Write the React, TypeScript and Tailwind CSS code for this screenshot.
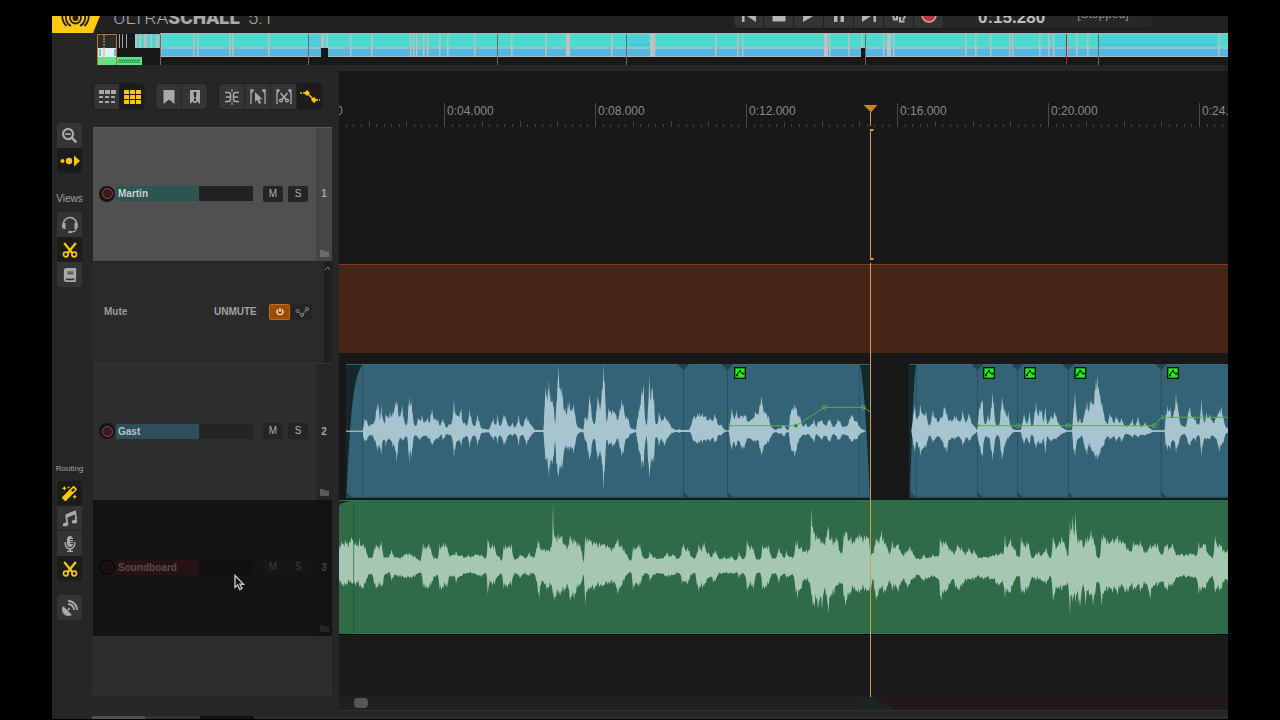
import type { ReactNode } from "react";
import { FaBook, FaHeadset, FaMagic, FaMicrophoneAlt, FaMusic, FaSatelliteDish, FaSearchMinus } from "react-icons/fa";

/* Peaks are [position, height above, depth below], three units to a pixel. */
type Peak = [number, number, number];
type Block = { start: number; peaks: Peak[] };

const guestFirst: Block[] = [
  { start: 3, peaks: [[18,1,1],[68,1,1],[70,12,20],[74,38,32],[80,34,30],[86,14,16],[92,22,14],[98,20,14],[104,30,30],[108,60,40],[112,84,62],[116,82,50],[120,30,50],[124,78,72],[128,40,30],[134,22,28],[137,55,48],[141,46,30],[146,40,25],[150,60,28],[154,46,32],[158,58,50],[162,60,42],[166,88,60],[170,92,96],[173,82,66],[177,46,30],[182,50,20],[187,78,30],[191,40,28],[196,20,18],[202,24,22],[205,72,60],[208,104,96],[211,80,60],[215,92,82],[218,56,50],[222,20,14],[228,14,14],[234,40,22],[240,34,28],[246,48,20],[252,25,16],[258,32,14],[263,42,22],[268,24,24],[272,50,34],[276,66,44],[280,42,38],[284,38,30],[289,36,24],[294,36,26],[300,14,16],[304,26,10],[308,38,28],[314,22,20],[320,10,10],[326,20,12],[332,20,12],[338,40,30],[342,96,82],[346,56,56],[350,50,32],[355,46,30],[360,56,32],[364,70,48],[368,26,24],[374,26,20],[380,16,14],[386,40,30],[389,68,54],[393,46,30],[398,20,16],[404,14,14],[409,30,24],[413,52,46],[418,30,26],[424,8,6],[446,4,4],[452,18,14],[456,30,20],[460,40,30],[464,20,16],[469,20,18],[472,52,40],[476,24,18],[482,16,16],[488,34,26],[492,52,46],[496,46,38],[500,30,24],[506,16,14],[512,14,10],[518,26,16],[524,10,8],[530,20,14],[536,50,46],[540,20,16],[548,12,12],[554,34,24],[560,46,44],[566,32,28],[572,20,16],[580,10,6],[586,3,3],[610,3,3],[613,60,46],[616,134,90],[620,104,86],[624,124,110],[627,154,148],[630,116,110],[634,90,90],[638,92,100],[641,80,82],[645,22,30],[649,80,100],[653,150,130],[656,196,142],[660,130,118],[664,134,112],[668,120,118],[672,60,62],[676,72,52],[680,50,50],[684,88,60],[688,90,60],[692,60,48],[696,70,56],[701,82,68],[706,46,40],[712,14,12],[720,8,4],[730,4,4],[734,40,26],[738,44,32],[743,36,60],[748,108,88],[753,76,70],[758,30,30],[764,20,24],[769,60,60],[773,106,88],[778,80,70],[782,76,70],[786,130,100],[790,196,182],[794,150,120],[799,26,26],[806,70,44],[812,60,38],[817,66,50],[822,60,44],[828,50,32],[834,34,24],[840,70,56],[845,96,78],[850,80,68],[855,44,34],[860,44,24],[866,36,20],[872,8,8],[888,3,3],[892,36,30]] },
  { start: 843, peaks: [[56,60,60],[60,78,70],[64,130,118],[67,110,90],[71,142,110],[75,40,40],[80,14,14],[84,70,90],[88,168,144],[91,100,110],[95,130,90],[98,136,98],[102,100,96],[106,24,20],[112,20,20],[117,58,48],[122,40,26],[128,34,34],[134,46,46],[138,38,30],[144,34,22],[150,20,12],[158,8,6],[168,3,3],[178,5,5],[190,3,3],[206,3,3],[212,14,6],[218,36,26],[224,48,34],[228,40,36],[233,54,40],[238,56,38],[243,44,28],[247,56,38],[252,44,26],[258,48,34],[263,34,26],[270,40,32],[277,30,20],[284,52,36],[290,36,30],[296,18,12],[303,20,14],[310,8,6],[318,2,2],[326,2,2],[331,30,40],[335,70,58],[340,44,34],[346,44,50],[350,64,44],[356,40,30],[362,48,44],[366,46,54],[372,50,56],[378,48,34],[384,30,24],[392,34,24],[400,40,32],[406,60,34],[412,52,28],[419,78,52],[424,104,74],[429,72,60],[434,60,44],[440,54,40],[446,46,36],[452,16,20],[458,8,8],[468,3,3],[478,10,10],[482,6,6],[488,18,14],[494,18,16],[498,6,6],[506,3,3],[510,50,40],[514,64,60],[519,72,64],[524,80,78],[530,68,58],[535,48,36],[540,46,22],[546,18,14],[552,16,12],[558,24,14],[564,12,10],[570,16,14],[575,20,22],[582,36,36],[588,12,10],[594,30,16],[600,30,20],[606,34,28],[612,22,16],[618,16,16],[624,32,30],[630,36,34],[636,18,14],[642,12,10],[648,20,16],[653,36,30],[660,30,26],[666,14,12],[674,14,12],[682,16,14],[688,36,24],[694,50,34],[700,42,30],[706,30,26],[712,30,26],[718,14,12],[726,5,5],[738,1,1]] },
];

const guestSecond: Block[] = [
  { start: 1683, peaks: [[34,1,1],[36,14,14],[40,50,40],[45,78,64],[50,36,30],[55,46,50],[61,80,76],[66,54,58],[72,50,50],[78,60,52],[84,24,24],[90,18,14],[95,40,24],[99,64,36],[104,42,28],[109,40,20],[115,28,18],[121,42,22],[126,40,30],[132,76,50],[136,70,56],[141,56,68],[146,30,28],[152,36,26],[158,32,22],[164,48,26],[170,44,22],[176,30,16],[182,30,24],[188,62,44],[194,34,32],[200,30,20],[206,54,30],[212,36,26],[218,20,14],[226,12,8],[231,3,3],[234,30,28],[238,70,44],[243,90,70],[248,96,80],[252,30,30],[258,20,14],[264,50,22],[269,30,24],[273,70,60],[277,118,90],[281,86,66],[285,30,26],[292,16,12],[298,20,20],[302,60,60],[306,104,86],[310,76,68],[315,66,44],[320,46,28],[325,60,24],[330,20,16],[338,6,5],[350,3,3],[362,3,3],[366,20,20],[372,52,40],[378,26,20],[384,30,30],[389,60,42],[394,14,12],[400,20,16],[404,56,40],[408,88,54],[413,50,34],[419,66,40],[425,64,40],[430,26,20],[436,72,70],[441,24,18],[447,30,26],[453,48,32],[458,36,28],[463,60,24],[469,46,26],[476,24,18],[484,12,10],[494,6,5],[502,2,2],[516,2,2],[520,60,56],[525,116,76],[529,60,42],[534,24,24],[540,40,22],[546,24,16],[551,40,36],[556,66,58],[561,90,74],[565,60,46],[570,96,50],[575,90,60],[580,80,68],[584,120,76],[588,156,86],[592,170,90],[596,130,78],[601,104,64],[606,86,52],[612,52,44],[618,28,24],[624,22,16],[629,54,26],[635,44,24],[641,24,16],[648,46,34],[653,36,24],[658,24,16],[664,40,34],[670,24,22],[676,16,10],[684,14,10],[692,24,14],[697,38,22],[702,14,12],[708,22,14],[714,44,20],[719,20,14],[726,12,12],[736,26,14],[742,16,10],[750,8,8],[758,2,2],[794,2,2],[797,50,46],[802,78,60],[806,60,44],[811,70,56],[816,36,30],[822,60,30],[828,114,66],[832,84,50],[837,48,36],[842,20,16],[850,14,10],[858,16,14],[864,52,36],[870,74,46],[875,44,30],[881,44,22],[886,38,32],[892,20,14],[898,20,14],[902,60,50],[905,102,80],[908,50,46],[914,24,20],[920,56,26],[925,40,24],[930,52,26],[936,34,14],[942,24,18],[948,44,24],[953,50,40],[958,64,64],[964,76,46],[970,40,36],[976,14,10],[984,8,6]] },
];

const soundboardAudio: Block[] = [
  { start: 3, peaks: [[-3,70,56],[0,60,50],[5,74,56],[10,66,62],[16,80,60],[22,70,56],[28,74,50],[34,88,52],[40,78,56],[46,72,60],[52,64,50],[58,84,64],[64,60,66],[70,68,70],[76,60,54],[82,34,36],[90,26,26],[98,28,28],[103,54,56],[108,66,70],[114,60,64],[120,64,60],[124,76,64],[129,36,56],[134,26,26],[142,28,24],[150,36,22],[154,50,44],[160,32,34],[168,28,28],[176,26,34],[184,28,34],[192,34,36],[200,38,36],[208,40,36],[216,34,36],[224,32,34],[232,22,24],[240,14,20],[246,40,30],[249,72,66],[255,60,68],[261,56,68],[267,70,66],[272,56,60],[278,30,46],[286,26,34],[294,24,28],[299,66,70],[304,58,74],[310,70,66],[316,72,60],[321,60,66],[327,34,34],[334,34,34],[342,36,32],[348,46,52],[356,30,34],[366,34,30],[376,26,24],[386,34,22],[396,30,24],[406,36,24],[416,34,30],[424,36,34],[432,26,24],[440,30,28],[443,84,86],[447,70,56],[453,56,50],[458,68,60],[464,64,56],[470,32,36],[478,28,28],[486,16,26],[491,60,70],[496,66,62],[502,56,66],[508,62,54],[514,68,60],[520,26,30],[530,22,24],[540,34,36],[550,30,24],[560,26,28],[568,42,30],[576,30,24],[584,28,26],[589,54,44],[594,80,80],[598,70,98],[602,56,60],[608,50,46],[614,52,56],[620,50,72],[627,50,66],[632,56,60],[637,80,70],[639,188,88],[642,96,106],[648,90,94],[654,98,84],[660,88,90],[666,94,74],[672,68,78],[678,66,70],[684,60,64],[690,94,104],[696,76,90],[702,84,100],[708,76,82],[714,74,66],[720,66,60],[726,40,46],[731,10,26],[736,92,118],[741,86,80],[748,82,72],[754,76,66],[762,74,74],[770,72,60],[778,72,64],[786,66,62],[794,68,58],[802,64,54],[810,58,54],[818,56,54],[826,66,54],[834,84,86],[840,60,70],[846,64,60],[852,52,46],[860,36,28],[868,18,20],[875,20,24],[879,60,76],[884,58,64],[890,54,52],[896,66,62]] },
  { start: 843, peaks: [[60,66,60],[64,46,46],[70,28,30],[78,22,22],[86,26,26],[89,46,46],[95,34,36],[104,28,28],[114,22,22],[124,24,24],[134,30,30],[142,42,34],[150,30,32],[158,36,28],[166,30,26],[174,22,22],[181,30,26],[186,58,56],[190,68,46],[196,48,50],[202,56,58],[208,46,42],[216,28,26],[226,24,22],[231,40,60],[236,66,76],[242,52,62],[248,62,70],[252,74,60],[258,46,50],[266,42,38],[272,28,34],[280,40,50],[286,48,46],[294,28,26],[304,22,24],[314,28,22],[324,24,24],[334,30,22],[344,18,24],[352,22,20],[357,44,38],[362,30,28],[370,20,22],[377,30,34],[381,80,76],[387,60,62],[394,64,60],[400,54,70],[406,28,34],[414,20,20],[422,22,24],[427,66,72],[433,54,68],[440,60,62],[446,64,56],[452,34,34],[462,24,24],[470,28,26],[477,56,50],[484,40,30],[492,24,24],[499,48,36],[505,30,34],[514,28,26],[522,30,34],[527,74,80],[532,78,98],[538,50,74],[544,60,70],[552,44,42],[560,50,44],[566,50,50],[571,60,60],[574,176,90],[578,120,118],[584,100,124],[589,96,100],[594,86,130],[600,84,96],[606,78,130],[612,70,76],[618,90,90],[622,108,110],[626,122,142],[630,80,96],[636,90,90],[642,74,90],[648,86,60],[654,76,60],[660,44,56],[666,38,54],[671,96,92],[676,104,120],[681,104,100],[687,80,90],[693,90,84],[700,76,70],[707,84,76],[714,92,80],[718,98,84],[725,90,72],[733,94,76],[740,92,76],[747,84,76],[752,36,80],[758,40,40],[763,60,70],[768,84,102],[774,76,90],[780,88,74],[785,108,66],[790,84,84],[797,70,78],[804,50,56],[811,40,50],[817,78,76],[823,60,66],[829,62,62],[835,70,80]] },
  { start: 1683, peaks: [[0,50,60],[8,34,44],[16,46,52],[22,44,66],[30,60,54],[36,48,42],[44,30,38],[54,24,28],[64,22,38],[72,36,46],[80,24,40],[90,28,36],[98,36,34],[108,30,36],[117,30,42],[120,86,90],[124,74,108],[130,76,84],[137,76,80],[144,60,70],[150,54,56],[158,44,40],[166,44,66],[172,66,68],[178,56,76],[184,58,62],[192,42,52],[200,44,46],[207,56,40],[214,38,42],[222,50,42],[230,34,34],[240,26,36],[250,28,40],[260,28,34],[270,30,42],[280,34,40],[288,40,56],[296,34,60],[304,42,50],[311,40,60],[315,96,96],[320,60,80],[326,66,80],[332,84,82],[338,60,60],[346,50,40],[354,30,34],[360,30,34],[363,92,86],[368,76,80],[374,62,84],[380,76,76],[386,70,66],[392,34,44],[400,24,36],[408,40,44],[416,46,42],[424,30,44],[432,44,50],[438,56,56],[446,30,40],[454,28,36],[459,90,106],[465,66,80],[471,58,70],[478,76,70],[485,90,76],[492,74,60],[499,48,60],[505,30,60],[510,140,146],[514,112,90],[518,150,110],[522,90,88],[526,162,110],[531,88,84],[536,84,110],[540,80,124],[546,80,70],[552,56,66],[557,86,120],[563,90,76],[568,80,90],[573,108,88],[579,90,118],[586,60,80],[592,26,50],[600,28,60],[605,90,120],[611,96,84],[617,86,76],[623,82,78],[630,70,66],[638,84,80],[646,82,70],[653,94,88],[660,80,68],[668,76,60],[676,68,82],[684,54,80],[692,44,60],[700,74,74],[707,66,70],[714,66,56],[721,76,78],[728,58,66],[736,44,56],[744,48,66],[751,66,100],[757,60,66],[765,70,60],[773,70,64],[780,40,50],[786,34,48],[794,60,66],[802,68,76],[810,56,62],[817,70,60],[824,46,46],[834,34,36],[846,38,32],[858,36,36],[870,38,32],[882,36,36],[892,36,44],[896,74,86],[903,58,78],[910,68,66],[917,66,70],[923,40,50],[932,30,36],[940,30,40],[945,90,82],[951,64,66],[958,68,76],[965,62,70],[972,50,50],[978,42,40],[984,50,46]] },
];

function wavePath(blocks: Block[], middle: number) {
  const points = blocks.flatMap((b) => b.peaks.map(([x, u, d]): Peak => [x + b.start, u, d]));
  const dense: Peak[] = [];
  points.forEach((p, i) => {
    dense.push(p);
    const next = points[i + 1];
    if (next && next[0] - p[0] > 2 && next[0] - p[0] < 14) {
      const dip = 0.74 + ((i * 7) % 5) * 0.05;
      dense.push([(p[0] + next[0]) / 2, ((p[1] + next[1]) / 2) * dip, ((p[2] + next[2]) / 2) * dip]);
    }
  });
  const top = dense.map(([x, u]) => `${x},${middle - u}`);
  const bottom = dense.map(([x, , d]) => `${x},${middle + d}`).reverse();
  return `M${[...top, ...bottom].join("L")}Z`;
}

function EnvelopeBadge({ x }: { x: number }) {
  return (
    <g transform={`translate(${x - 18} 9)`}>
      <rect width="36" height="36" fill="#061006" />
      <rect x="4" y="4" width="28" height="28" fill="#22ee22" />
      <path d="M8 25 13 17 18 12 23 18 28 19" fill="none" stroke="#052505" strokeWidth="3.5" />
      <path d="M6 22h6v6H6zM15 9h6v6h-6zM25 17h6v6h-6z" fill="#052505" />
    </g>
  );
}

function GuestLane() {
  const splits = [1033, 1165, 1915, 2035, 2188, 2466];
  return (
    <svg className="block h-[134px] w-full" viewBox="0 0 2667 402" preserveAspectRatio="none" aria-label="Gast audio">
      <path d="M21 0H1593V402H21ZM1712 0H2667V402H1712Z" fill="#336375" />
      <path d="M21 0H71C40 40 34 170 22 402H21ZM1563 0H1593V402C1586 250 1576 60 1563 0ZM1712 0H1732C1722 60 1718 240 1713 402H1712Z" fill="#16272c" />
      <path d="M21 1H1593M1712 1H2667" stroke="#3a7180" strokeWidth="3" />
      <path d="M71 4V402M1561 4V402M1732 4V402" stroke="#2a5464" strokeWidth="3" />
      {splits.map((x) => (
        <g key={x} fill="#234450">
          <path d={`M${x - 1} 0h3v402h-3z`} fill="#28505f" />
          <path d={`M${x - 18} 0h36L${x} 19z`} />
          <path d={`M${x} 384 ${x + 18} 402H${x}z`} />
        </g>
      ))}
      <path d="M23 384 40 402H23ZM1714 384 1731 402H1714Z" fill="#234450" />
      <path d="M21 202H75M2440 202H2480M1010 202H1060" stroke="#a6c5d0" strokeWidth="3" />
      <path d={wavePath(guestFirst, 201)} fill="#a6c5d0" />
      <path d={wavePath(guestSecond, 201)} fill="#a6c5d0" />
      <g fill="none" stroke="#5cab4d" strokeWidth="3">
        <path d="M1169 185H1371L1457 130H1573L1593 143M1916 185H2445L2467 160H2667" />
        <circle cx="1371" cy="185" r="5" fill="#2e6a3c" />
        <circle cx="1457" cy="130" r="6" />
        <circle cx="1573" cy="130" r="6" />
        <circle cx="2036" cy="185" r="6" />
        <circle cx="2188" cy="185" r="6" />
        <circle cx="2445" cy="185" r="6" />
        <path d="M1167 179a6 6 0 0 1 0 12M1914 179a6 6 0 0 1 0 12M2466 154a6 6 0 0 1 0 12" />
      </g>
      {[1203, 1950, 2073, 2224, 2502].map((x) => <EnvelopeBadge key={x} x={x} />)}
      <path d="M21 400H1593M1712 400H2667" stroke="#274d5b" strokeWidth="3" />
    </svg>
  );
}

function SoundboardLane() {
  return (
    <svg className="block h-[134px] w-full" viewBox="0 0 2667 402" preserveAspectRatio="none" aria-label="Soundboard audio">
      <path d="M0 0H2667V402H0Z" fill="#306b48" />
      <path d="M0 3H42C24 3 10 8 0 16Z" fill="#16281f" />
      <path d="M0 1H2667M0 400H2667" stroke="#2b7350" strokeWidth="3" />
      <path d={wavePath(soundboardAudio, 198)} fill="#a5c7b4" />
      <path d="M44 4V402" stroke="#1c4a33" strokeWidth="3" opacity=".6" />
    </svg>
  );
}

function Overview() {
  const joints = [160, 193, 197, 229, 232, 268, 350, 371, 410, 413, 416, 423, 427, 439, 447, 474, 511, 545, 611, 654, 715, 737, 742, 829, 848, 861, 883, 893, 965, 975, 990, 1009, 1012, 1039, 1048, 1053, 1066, 1076, 1087, 1218];
  const wide = [566, 650, 824, 887];
  return (
    <svg className="block h-8 w-full" viewBox="97 33 1131 32" preserveAspectRatio="none" aria-label="Project overview">
      <path d="M97 33h1131v32H97z" fill="#181818" />
      <path d="M160 33h1068v24H160z" fill="#a9b9bc" />
      <path d="M160 34h1068v14H160z" fill="#4cdacf" />
      <path d="M160 47h1068v2H160z" fill="#a3bdc0" />
      <path d="M160 49h1068v7H160z" fill="#4db9e6" />
      <path d="M309 35h12v12h-12zM1053 35h16v12h-16zM1098 35h119v12h-119zM627 35h22v12h-22z" fill="#4bcfdb" />
      <path d="M630 44.500h19M1100 44.500h115" stroke="#3f96d2" strokeDasharray="1 1" />
      {joints.map((x) => <path key={x} d={`M${x} 34h1.500v23h-1.500z`} fill="#b9bfc0" />)}
      {wide.map((x) => <path key={x} d={`M${x} 34h4v23h-4z`} fill="#bcc2c3" />)}
      <path d="M321 34h3v14h-3zM326 34h2v14h-2z" fill="#b5bfc0" />
      <path d="M321 48h7v10h-7zM861 48h4.500v10H861z" fill="#161616" />
      <path d="M135 34h25v14h-25z" fill="#4cdacf" />
      <path d="M135 34h2v14h-2zM139 34h2v14h-2zM144 34h3v14h-3zM150 34h2v14h-2zM156 34h3v14h-3z" fill="#b5bfc0" />
      <path d="M119 34h1v14h-1zM122 34h1v14h-1zM126 34h1v14h-1z" fill="#a5a5a5" />
      <path d="M98 34h18v14H98z" fill="#2c2c2c" />
      <path d="M98 48h18v9H98z" fill="#dff0f4" />
      <path d="M99 49h2v7h-2zM114 49h2v7h-2z" fill="#5ec3e6" />
      <path d="M98 57h44v8H98z" fill="#5fe28e" />
      <path d="M118 59h22v4h-22z" fill="#30a95a" />
      <path d="M118 59.500h22M119 61.500h21" stroke="#62dd8a" strokeDasharray="1 1" />
      <path d="M97.500 65V34.500H116.500V65" fill="none" stroke="#c87516" />
      <path d="M104 35v13" stroke="#e0b060" strokeDasharray="2 1" />
      <path d="M104 48v17" stroke="#e0a850" />
      <path d="M160.500 34v31M308.500 34v31M497.500 34v31M626.500 34v31M865.500 34v31M1098.500 34v31" stroke="#6b6967" />
      <path d="M1066.500 34v31" stroke="#c0202b" />
    </svg>
  );
}

function Logo() {
  return (
    <svg className="h-[17px] w-12 shrink-0" viewBox="0 0 48 17" aria-label="Ultraschall logo">
      <path d="M0 0H48L41 17H0Z" fill="#fdc911" />
      <g fill="none" stroke="#231d0a" strokeWidth="1.800">
        <circle cx="23.500" cy="2" r="5.500" />
        <path d="M14.500-2a9.500 9.500 0 0 0 4.500 12M32.500-2a9.500 9.500 0 0 1-4.500 12M10.500-2a13.500 13.500 0 0 0 4 12M36.500-2a13.500 13.500 0 0 1-4 12" />
      </g>
      <circle cx="23.500" cy="2" r="3" fill="#231d0a" />
    </svg>
  );
}

function ScissorsIcon({ className }: { className: string }) {
  return (
    <svg className={className} viewBox="0 0 16 16" fill="none" stroke="currentColor" aria-hidden="true">
      <path d="M2.200 1 10.200 11M13.800 1 5.800 11" strokeWidth="2.200" />
      <circle cx="3.800" cy="12.500" r="2.300" strokeWidth="1.700" />
      <circle cx="12.200" cy="12.500" r="2.300" strokeWidth="1.700" />
    </svg>
  );
}

function Tool({ label, active, className = "", children }: { label: string; active?: boolean; className?: string; children: ReactNode }) {
  return (
    <button
      type="button"
      aria-label={label}
      className={`flex h-[25px] w-[25px] items-center justify-center ${active ? "bg-[#1b1c1b] text-[#fdc60d]" : "bg-[#343434] text-[#a9a9a9]"} ${className}`}
    >
      {children}
    </button>
  );
}

function GridIcon({ rows }: { rows: number[] }) {
  return (
    <svg className="h-4 w-[18px]" viewBox="0 0 18 16" fill="currentColor" aria-hidden="true">
      {[1, 7, 13].map((x) => rows.map((h, r) => <rect key={`${x}-${r}`} x={x} y={1 + r * 5 + (4 - h) / 2} width={h < 4 ? 4 : 5} height={h} rx=".5" />))}
    </svg>
  );
}

function Toolbar() {
  return (
    <div className="flex gap-3 pl-[42px] pt-[19px]" role="toolbar" aria-label="Edit tools">
      <div className="flex overflow-hidden rounded-[4px] shadow-[0_0_0_1px_#1f1f1f]">
        <Tool label="Coarse grid"><GridIcon rows={[4, 2, 2]} /></Tool>
        <Tool label="Fine grid" active><GridIcon rows={[4, 4, 4]} /></Tool>
      </div>
      <div className="flex gap-px overflow-hidden rounded-[4px] shadow-[0_0_0_1px_#1f1f1f]">
        <Tool label="Chapter marker">
          <svg className="h-4 w-3" viewBox="0 0 12 16" fill="currentColor"><path d="M.5 1h11v14L6 10.500.5 15z" /></svg>
        </Tool>
        <Tool label="Edit marker">
          <svg className="h-4 w-3" viewBox="0 0 12 16"><path d="M1 1h10v14l-2.500-2.500L6 14.500l-2.500-2L1 15z" fill="currentColor" /><path d="M4.500 3h3L7 8.500H5zM5 9.500h2v2.500H5z" fill="#2b2b2b" /></svg>
        </Tool>
      </div>
      <div className="flex gap-px overflow-hidden rounded-[4px] shadow-[0_0_0_1px_#1f1f1f]">
        <Tool label="Split">
          <svg className="h-4 w-4" viewBox="0 0 16 16" fill="none" stroke="currentColor" strokeWidth="1.500"><path d="M1 3.500h3.500q2 0 2 2v5q0 2-2 2H1M15 3.500h-3.500q-2 0-2 2v5q0 2 2 2H15M2 8h4.500M9.500 8H14" /><path d="M8 0v3M8 13v3" strokeWidth="1" /></svg>
        </Tool>
        <Tool label="Select range">
          <svg className="h-4 w-4" viewBox="0 0 16 16"><path d="M3.500 1H1v14M12.500 1H15v14M3.500 1 1 4M12.500 1 15 4" fill="none" stroke="currentColor" strokeWidth="1.300" /><path d="M5 3v10l2.300-2.200L9 15l2-1-1.700-3.700h3.200z" fill="currentColor" /></svg>
        </Tool>
        <Tool label="Cut range">
          <svg className="h-4 w-4" viewBox="0 0 16 16" fill="none" stroke="currentColor" strokeWidth="1.300"><path d="M3.500 1H1v14M12.500 1H15v14M3.500 1 1 4M12.500 1 15 4" /><path d="M4.500 4 10 10.500M11.500 4 6 10.500" strokeWidth="1.600" /><circle cx="5" cy="11.500" r="1.400" /><circle cx="11" cy="11.500" r="1.400" /></svg>
        </Tool>
        <Tool label="Envelopes" active>
          <svg className="h-5 w-5" viewBox="0 0 20 20" fill="currentColor"><path d="M7 3 10 6 7 9 4 6zM14 10l3 3-3 3-3-3z" /><path d="M7 6 14 13" stroke="currentColor" strokeWidth="1.500" /><path d="M0 6h5M16 13h4" stroke="currentColor" strokeWidth="1.300" strokeDasharray="2 1" /></svg>
        </Tool>
      </div>
    </div>
  );
}

function Sidebar() {
  return (
    <nav className="flex w-[41px] shrink-0 flex-col items-center pr-[6px] pt-[14px]" aria-label="Views and routing">
      <div className="flex flex-col overflow-hidden rounded-[4px]">
        <Tool label="Zoom out"><FaSearchMinus size={15} /></Tool>
        <Tool label="Follow playback" active>
          <svg className="h-5 w-5" viewBox="0 0 20 20" fill="currentColor"><circle cx="2.500" cy="10" r="2" /><circle cx="9" cy="10" r="3.200" /><path d="M14 4.500v11l6-5.500z" /></svg>
        </Tool>
      </div>
      <h2 className="mt-[19px] whitespace-nowrap text-[10px] leading-[14px] text-[#a3a3a3]">Views</h2>
      <div className="mt-[6px] flex flex-col overflow-hidden rounded-[4px]">
        <Tool label="Record view">
          <svg className="h-[18px] w-[18px]" viewBox="0 0 18 18" fill="none" stroke="currentColor" aria-hidden="true">
            <path d="M2 9a7 7.500 0 0 1 14 0" strokeWidth="1.500" />
            <path d="M4.500 7v6C2 13.500 1 12 1 10s1-3.500 3.500-3zM13.500 7v6c2.500.5 3.500-1 3.500-3s-1-3.500-3.500-3z" fill="currentColor" stroke="none" />
            <path d="M15 13q-.5 3-5 3" strokeWidth="1.300" />
            <ellipse cx="9" cy="16" rx="2" ry="1.300" fill="currentColor" stroke="none" />
          </svg>
        </Tool>
        <Tool label="Edit view" active><ScissorsIcon className="h-4 w-4" /></Tool>
        <Tool label="Storyboard view"><FaBook size={14} /></Tool>
      </div>
      <h2 className="mt-[175px] whitespace-nowrap text-[8px] leading-[14px] text-[#a3a3a3]">Routing</h2>
      <div className="mt-[5px] flex flex-col overflow-hidden rounded-[4px]">
        <Tool label="Magic routing" active><FaMagic size={15} /></Tool>
        <Tool label="Music" className="border-b border-[#242424]"><FaMusic size={15} className="-rotate-6" /></Tool>
        <Tool label="Recording"><FaMicrophoneAlt size={16} /></Tool>
        <Tool label="Editing" active><ScissorsIcon className="h-4 w-4" /></Tool>
      </div>
      <div className="mt-[14px] overflow-hidden rounded-[4px]">
        <Tool label="On air"><FaSatelliteDish size={16} /></Tool>
      </div>
    </nav>
  );
}

type TrackProps = { name: string; index: number; panel: string; strip: string; fill: string; rest: string; dim?: boolean };

function Track({ name, index, panel, strip, fill, rest, dim }: TrackProps) {
  const button = dim ? "bg-[#161616] text-[#3c3c3c]" : "bg-[#242424] text-[#b0b0b0]";
  return (
    <section className={`relative flex ${panel}`} aria-label={name}>
      <div className="flex min-w-0 flex-1 items-center pb-[2px] pl-[6px]">
        <button type="button" aria-label={`Arm ${name}`} className={`flex size-4 shrink-0 items-center justify-center rounded-full ${dim ? "bg-[#0b0b0b]" : "bg-[#171313]"}`}>
          <span className={`size-[11px] rounded-full border ${dim ? "border-[#351c1e] bg-[#141010]" : "border-[#9b454a] bg-[#351d1f]"}`} />
        </button>
        <div className={`ml-px flex h-[15px] w-[137px] ${rest}`}>
          <span className={`w-[83px] pl-[2px] text-[10px] font-bold leading-[15px] ${fill}`}>{name}</span>
        </div>
        <button type="button" aria-label={`Mute ${name}`} className={`ml-[10px] h-4 w-5 rounded-[2px] text-[10px] leading-4 ${button}`}>M</button>
        <button type="button" aria-label={`Solo ${name}`} className={`ml-[5px] h-4 w-5 rounded-[2px] text-[10px] leading-4 ${button}`}>S</button>
      </div>
      <div className={`relative flex w-4 items-center justify-center pb-[2px] text-[10px] font-bold ${strip}`}>
        {index}
        <svg className="absolute bottom-1 left-1 h-2 w-[9px] opacity-40" viewBox="0 0 9 8" fill="currentColor" aria-hidden="true"><path d="M0 1h4l1 1.500h4V8H0z" /></svg>
      </div>
      {dim && (
        <svg className="absolute left-[141px] top-[74px] h-[18px] w-3" viewBox="0 0 12 18" aria-hidden="true">
          <path d="M1 1.500v12L3.700 11l2 4.500 2.300-1-2-4.300H9.500z" fill="#151515" stroke="#c4c4c4" strokeWidth="1.400" />
        </svg>
      )}
    </section>
  );
}

function MuteEnvelope() {
  return (
    <section className="flex h-[102px] border-t border-[#232323] bg-[#2b2a2a]" aria-label="Mute envelope">
      <div className="flex flex-1 items-center pb-[2px] pl-[11px] text-[10px] font-bold text-[#9c9c9c]">
        <span className="w-[100px]">Mute</span>
        <span className="w-[54px] pl-[10px] text-[#a2a2a2]">UNMUTE</span>
        <button type="button" aria-label="Bypass envelope" className="ml-[11px] flex h-4 w-[21px] items-center justify-center rounded-[2px] border border-[#c26a13] bg-[#9c4d05] text-white">
          <svg className="size-[10px]" viewBox="0 0 10 10" fill="none" stroke="currentColor" strokeWidth="1.200"><path d="M5 1v4M3 2.500a3 3 0 1 0 4 0" /></svg>
        </button>
        <button type="button" aria-label="Envelope options" className="ml-px flex h-4 w-[21px] items-center justify-center rounded-[2px] bg-[#252525] text-[#8a8a8a]">
          <svg className="h-[10px] w-[14px]" viewBox="0 0 14 10" fill="none" stroke="currentColor"><circle cx="2.500" cy="4" r="1.500" /><circle cx="7" cy="8" r="1.500" /><circle cx="12" cy="2" r="1.500" /><path d="m3.700 5 2 2M8 6.800 11 3.200" /></svg>
        </button>
      </div>
      <div className="w-2 bg-[#1f1f1f] pt-1 text-[#7d7d7d]">
        <svg className="block h-[6px] w-2" viewBox="0 0 8 6" fill="none" stroke="currentColor"><path d="m1 4 3-3 2 3" /></svg>
      </div>
    </section>
  );
}

function Ruler() {
  const labels = ["0:00.000", "0:04.000", "0:08.000", "0:12.000", "0:16.000", "0:20.000", "0:24.000"];
  return (
    <ol className="-ml-[46px] mt-8 flex h-6 text-xs leading-[17px] text-[#8a8a8a]">
      {labels.map((label) => (
        <li key={label} className="flex w-[151px] shrink-0 flex-col justify-between border-l border-[#4a4a4a] pl-[2px]">
          <span>{label}</span>
          <svg className="-ml-[3px] block h-[6px] w-[151px]" viewBox="0 0 151 6" aria-hidden="true">
            {Array.from({ length: 19 }, (_, i) => i + 1).map((i) => (
              <rect key={i} x={Math.round(i * 7.55)} y={i === 10 ? 0 : i % 5 === 0 ? 1 : 3} width="1" height="6" fill="#434343" />
            ))}
          </svg>
        </li>
      ))}
    </ol>
  );
}

function Arrangement() {
  return (
    <main className="relative mt-[6px] flex min-w-0 flex-1 flex-col overflow-hidden bg-[#181818]">
      <Ruler />
      <div className="h-[137px]" aria-label="Martin audio" />
      <div className="h-[89px] border-t border-[#843e1b] bg-[#442516]" aria-label="Mute automation" />
      <div className="mt-[11px]"><GuestLane /></div>
      <div className="mt-[2px]"><SoundboardLane /></div>
      <div className="h-[62px] border-t border-black bg-[#1a1a1a]" />
      <div className="relative flex h-[15px] items-center border-b border-[#303030] bg-[#202020] pl-[15px]">
        <span className="h-[10px] w-[14px] rounded-[4px] bg-[#565656]" />
        <span className="ml-[507px] h-full flex-1 bg-[#20191c]" />
        <svg className="absolute bottom-0 left-[517px] h-[13px] w-10" viewBox="0 0 40 13" aria-hidden="true"><path d="M0 13 8 2Q14-2 20 2L40 13Z" fill="#1a261f" /></svg>
      </div>
      <svg className="absolute left-[525px] top-[34px] h-[592px] w-[13px]" viewBox="0 0 13 592" aria-label="Play cursor">
        <path d="M0 0H13L7 7Z" fill="#c98318" stroke="#e6a52d" strokeWidth=".5" />
        <path d="M6.500 7v14M6.500 24V155M6.500 158V592" fill="none" stroke="#e49a30" />
        <path d="M6.500 25H9.500M6.500 154H9.500" stroke="#e49a30" strokeWidth="2" />
      </svg>
    </main>
  );
}

function Transport() {
  const items: [string, ReactNode][] = [
    ["Go to start", <path key="i" d="M1 1h2.500v14H1zM15 1v14L4.500 8z" />],
    ["Stop", <path key="i" d="M1.500 1.500h13v13h-13z" />],
    ["Play", <path key="i" d="M2 1v14l12-7z" />],
    ["Pause", <path key="i" d="M3 1h3.500v14H3zM9.500 1H13v14H9.500z" />],
    ["Go to end", <path key="i" d="M15 1h-2.500v14H15zM1 1v14l10.500-7z" />],
    ["Repeat", <path key="i" d="M3.500 12A6 6 0 0 1 4 3.500M12.500 4a6 6 0 0 1-.5 8.500M2 12.500h4V8.500M9 10v4.500h4.500" fill="none" stroke="currentColor" strokeWidth="2" />],
    ["Record", <circle key="i" cx="8" cy="8" r="7" fill="#b83a41" stroke="#d4a4a6" strokeWidth="1.500" />],
  ];
  return (
    <div className="mb-[5px] mr-[76px] flex w-[418px] shrink-0 items-end overflow-hidden rounded-[5px] bg-[#272727] text-[#b4b4b4] shadow-[0_1px_0_#1b1b1b]">
      {items.map(([label, icon]) => (
        <button key={label} type="button" aria-label={label} className="flex h-7 w-[30px] items-center justify-center border-r border-[#222] bg-[#333] pt-[2px]">
          <svg className="size-4" viewBox="0 0 16 16" fill="currentColor">{icon}</svg>
        </button>
      ))}
      <output className="ml-[34px] text-[17px] font-bold leading-5 text-[#bdbdbd]">0:15.280</output>
      <span className="ml-8 pb-1 text-xs leading-5 text-[#8c8c8c]">[Stopped]</span>
    </div>
  );
}

export default function App() {
  return (
    <div className="min-h-screen bg-black px-[52px] pb-px pt-4 font-['Liberation_Sans',Arial,sans-serif]">
      <div className="flex flex-col bg-[#262626]">
        <header className="flex h-[17px] items-end overflow-hidden bg-[#222]">
          <Logo />
          <h1 className="mb-[5px] ml-[13px] whitespace-nowrap font-[Roboto,sans-serif] text-[19px] font-light leading-5 text-[#a9a9a9]">
            ULTRA<span className="font-black">SCHALL</span>
            <span className="ml-2">5.1</span>
          </h1>
          <div className="flex-1" />
          <Transport />
        </header>
        <div className="pl-[45px]"><Overview /></div>
        <div className="flex">
          <aside className="flex w-[287px] shrink-0 flex-col">
            <Toolbar />
            <div className="flex flex-1">
              <Sidebar />
              <div className="mr-[7px] flex flex-1 flex-col pb-[15px] pt-[18px]">
                <Track name="Martin" index={1} panel="h-[134px] bg-[#505050] border-t border-[#5c5c5c]" strip="bg-[#464646] text-[#a8a8a8]" fill="bg-[#2b5551] text-[#c9d0cf]" rest="bg-[#222]" />
                <MuteEnvelope />
                <Track name="Gast" index={2} panel="h-[137px] bg-[#2d2d2d] border-t border-[#353535]" strip="bg-[#252525] text-[#a8a8a8]" fill="bg-[#2d4e5b] text-[#bcc5c9]" rest="bg-[#242424]" />
                <Track name="Soundboard" index={3} panel="h-[136px] bg-[#141414]" strip="bg-[#121212] text-[#444]" fill="bg-[#251314] text-[#5a4b4b]" rest="bg-[#111]" dim />
                <div className="flex-1 border border-[#313131] bg-[#2c2c2c]" />
              </div>
            </div>
          </aside>
          <Arrangement />
        </div>
        <footer className="flex h-2 items-end pl-10">
          <span className="h-[3px] w-[53px] bg-[#505050]" />
          <span className="h-[3px] w-[55px] bg-[#333]" />
          <span className="h-[3px] w-[54px] bg-[#121212]" />
          <span className="h-[3px] flex-1 bg-[#2d2d2d]" />
        </footer>
      </div>
    </div>
  );
}
